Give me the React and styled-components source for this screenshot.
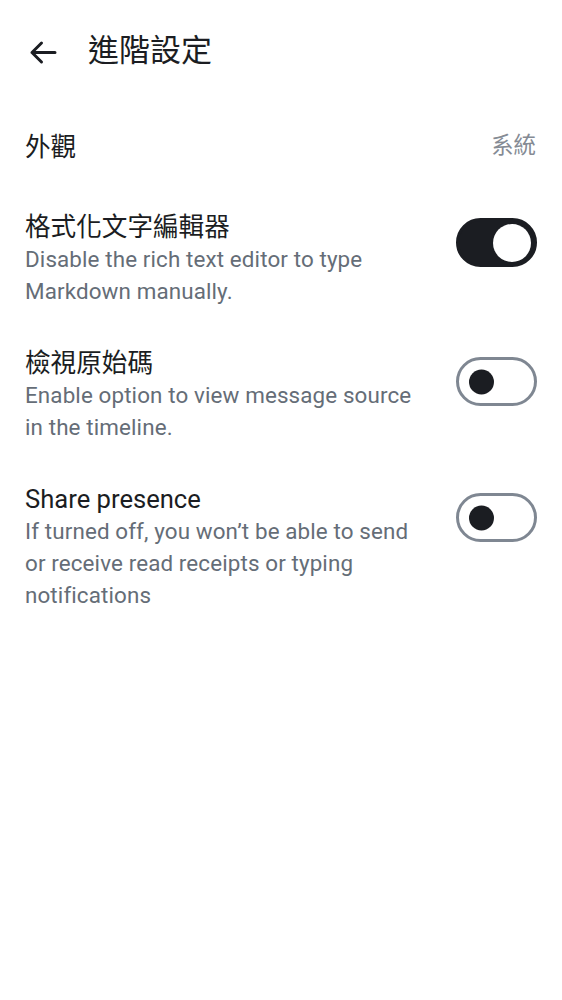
import React from "react";
import styled, { createGlobalStyle } from "styled-components";

const Global = createGlobalStyle`
  html, body { margin: 0; padding: 0; background: #ffffff; }
  body { font-family: Roboto, "Noto Sans CJK TC", sans-serif; -webkit-font-smoothing: antialiased; }
`;

const Page = styled.div`
  width: 562px;
  min-height: 1000px;
  background: #ffffff;
  color: #1b1d22;
  display: flex;
  flex-direction: column;
`;

const TopBar = styled.header`
  height: 102px;
  display: flex;
  align-items: center;
  padding: 0 0 0 6px;
  box-sizing: border-box;
`;

const BackButton = styled.button`
  width: 76px;
  height: 76px;
  border: 0;
  background: transparent;
  padding: 0;
  display: flex;
  align-items: center;
  justify-content: center;
  color: #1b1d22;
  cursor: pointer;
`;

const Title = styled.h1`
  margin: 0 0 0 6px;
  font-family: Roboto, "Noto Sans CJK TC", sans-serif;
  font-weight: 400;
  font-size: 31px;
  line-height: 40px;
  color: #1b1d22;
`;

const List = styled.div`
  display: flex;
  flex-direction: column;
`;

const Row = styled.div`
  display: flex;
  align-items: center;
  gap: 24px;
  padding: ${(p) => (p.$single ? "0 26px 0 25px" : "20px 25px 20px 25px")};
  min-height: ${(p) => (p.$single ? "89px" : "auto")};
  box-sizing: border-box;
`;

const Texts = styled.div`
  flex: 1;
  display: flex;
  flex-direction: column;
  min-width: 0;
`;

const ItemTitle = styled.div`
  font-size: 25.6px;
  line-height: 32px;
  color: #1b1d22;
  font-family: Roboto, "Noto Sans CJK TC", sans-serif;
`;

const ItemDesc = styled.div`
  font-size: 22.4px;
  line-height: 32px;
  color: #656d77;
  letter-spacing: 0.12px;
  font-family: Roboto, "Noto Sans CJK TC", sans-serif;
`;

const Trailing = styled.div`
  font-size: 22.4px;
  line-height: 30px;
  padding-bottom: 4px;
  color: #858b94;
  font-family: Roboto, "Noto Sans CJK TC", sans-serif;
`;

const Track = styled.div`
  flex: none;
  width: 81px;
  height: 49px;
  border-radius: 25px;
  box-sizing: border-box;
  position: relative;
  background: ${(p) => (p.$on ? "#1b1d22" : "#ffffff")};
  border: 3px solid ${(p) => (p.$on ? "#1b1d22" : "#7f8792")};
  margin-top: ${(p) => p.$offset || 0}px;
  align-self: flex-start;
`;

const Thumb = styled.span`
  position: absolute;
  top: 50%;
  border-radius: 50%;
  transform: translateY(-50%);
  ${(p) =>
    p.$on
      ? `width: 38px; height: 38px; right: 3.5px; background: #ffffff;`
      : `width: 25px; height: 25px; left: 9.5px; background: #1b1d22;`}
`;

const Switch = ({ on, offset }) => (
  <Track $on={on} $offset={offset} role="switch" aria-checked={on}>
    <Thumb $on={on} />
  </Track>
);

export default function App() {
  return (
    <Page>
      <Global />
      <TopBar>
        <BackButton aria-label="Back">
          <svg width="38" height="38" viewBox="0 0 38 38" fill="none">
            <path
              d="M30 20.5H7M16.5 11L7 20.5L16.5 30"
              stroke="#1b1d22"
              strokeWidth="3"
              strokeLinecap="round"
              strokeLinejoin="round"
            />
          </svg>
        </BackButton>
        <Title>進階設定</Title>
      </TopBar>
      <List>
        <Row $single>
          <Texts>
            <ItemTitle>外觀</ItemTitle>
          </Texts>
          <Trailing>系統</Trailing>
        </Row>
        <Row>
          <Texts>
            <ItemTitle>格式化文字編輯器</ItemTitle>
            <ItemDesc>Disable the rich text editor to type Markdown manually.</ItemDesc>
          </Texts>
          <Switch on offset={7} />
        </Row>
        <Row>
          <Texts>
            <ItemTitle>檢視原始碼</ItemTitle>
            <ItemDesc>Enable option to view message source in the timeline.</ItemDesc>
          </Texts>
          <Switch offset={10} />
        </Row>
        <Row>
          <Texts>
            <ItemTitle>Share presence</ItemTitle>
            <ItemDesc>If turned off, you won’t be able to send or receive read receipts or typing notifications</ItemDesc>
          </Texts>
          <Switch offset={10} />
        </Row>
      </List>
    </Page>
  );
}
